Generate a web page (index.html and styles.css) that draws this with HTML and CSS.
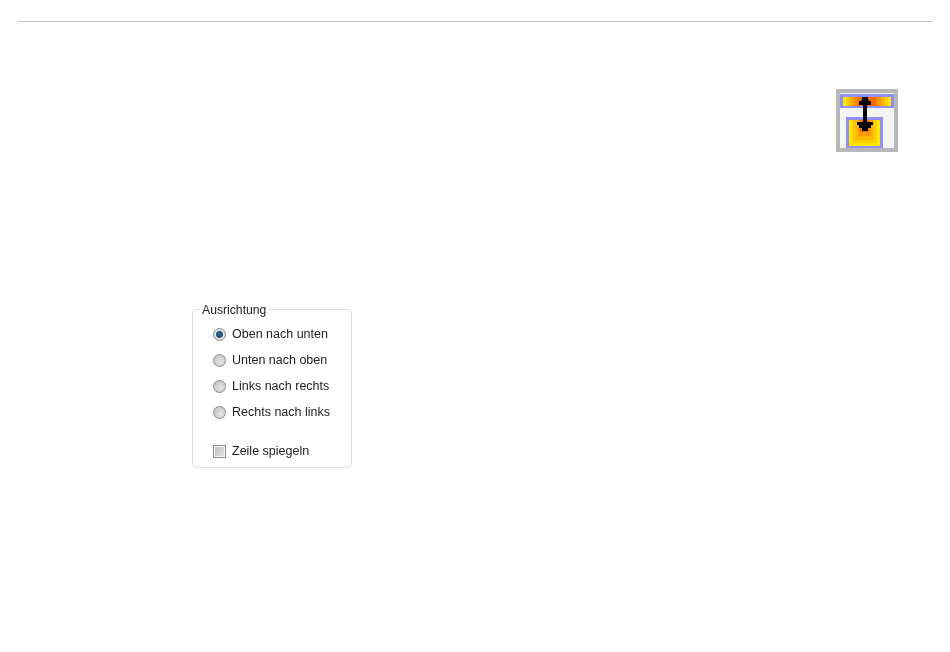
FILE: index.html
```html
<!DOCTYPE html>
<html lang="de">
<head>
    <meta charset="UTF-8">
    <meta name="viewport" content="width=device-width, initial-scale=1.0">
    <title>Ausrichtung</title>
    <link rel="stylesheet" href="styles.css">
</head>
<body>
    <hr class="top-rule">
    <div class="content">
        <svg class="orient-icon" width="62" height="63" viewBox="0 0 62 63" shape-rendering="crispEdges">
            <rect width="62" height="63" fill="#b8b8b8"/>
            <rect x="4" y="4" width="54" height="55" fill="#f4f4f4"/>
            <!-- top box -->
            <rect x="4" y="5" width="54" height="14" fill="#8f8ff6"/>
            <rect x="7" y="8" width="48" height="9" fill="#ffe800"/>
            <rect x="10" y="8" width="42" height="9" fill="#ffd000"/>
            <rect x="13" y="8" width="36" height="9" fill="#ffb800"/>
            <rect x="16" y="8" width="30" height="9" fill="#ffa000"/>
            <rect x="19" y="8" width="24" height="9" fill="#ff8800"/>
            <rect x="22" y="8" width="18" height="9" fill="#f86800"/>
            <!-- bottom box -->
            <rect x="10" y="28" width="37" height="31" fill="#8f8ff6"/>
            <rect x="13" y="31" width="31" height="26" fill="#ffe800"/>
            <rect x="16" y="31" width="25" height="23" fill="#ffd000"/>
            <rect x="19" y="31" width="19" height="20" fill="#ffb800"/>
            <rect x="22" y="31" width="13" height="16" fill="#ff9800"/>
            <rect x="24" y="31" width="9" height="12" fill="#f87000"/>
            <!-- arrow -->
            <rect x="27" y="10" width="4" height="31" fill="#000"/>
            <rect x="26" y="8" width="6" height="3" fill="#000"/>
            <rect x="25" y="11" width="8" height="1" fill="#000"/>
            <rect x="23" y="12" width="12" height="4" fill="#000"/>
            <rect x="21" y="33" width="16" height="3" fill="#000"/>
            <rect x="23" y="36" width="12" height="3" fill="#000"/>
            <rect x="26" y="39" width="6" height="3" fill="#000"/>
        </svg>
        <fieldset class="orient-box">
            <legend>Ausrichtung</legend>
            <label class="opt"><span class="radio checked"></span>Oben nach unten</label>
            <label class="opt"><span class="radio"></span>Unten nach oben</label>
            <label class="opt"><span class="radio"></span>Links nach rechts</label>
            <label class="opt"><span class="radio"></span>Rechts nach links</label>
            <label class="opt mirror"><span class="check"></span>Zeile spiegeln</label>
        </fieldset>
    </div>
</body>
</html>
```

FILE: styles.css
```css
body {
    font-family: "Liberation Sans", Arial, sans-serif;
    background-color: #ffffff;
    color: #222222;
    margin: 0;
    padding: 21px 18px 0;
}
.top-rule {
    border: none;
    border-top: 1px solid #c0c0c0;
    margin: 0;
}
.content {
    padding: 67px 34px 0 174px;
}
.orient-icon {
    display: block;
    margin-left: auto;
    filter: blur(0.4px);
}
.orient-box {
    box-sizing: border-box;
    width: 160px;
    height: 167px;
    margin: 149px 0 0 0;
    padding: 4px 0 0 0;
    border: 1px solid #d5dfe0;
    border-radius: 4px;
    font-size: 12.5px;
    filter: blur(0.3px);
}
.orient-box legend {
    padding: 2px 2px 0;
    margin-left: 7px;
    font-size: 12.2px;
    line-height: 14px;
}
.opt {
    display: flex;
    align-items: center;
    gap: 6px;
    height: 26px;
    margin-left: 20px;
}
.mirror {
    margin-top: 13px;
}
.radio {
    box-sizing: border-box;
    width: 13px;
    height: 13px;
    border-radius: 50%;
    border: 1px solid #8a8b8b;
    background: radial-gradient(circle at 60% 60%, #e6e6e6, #bcbcbc);
}
.radio.checked {
    background: radial-gradient(circle, #2a6ea6 0, #1c4f80 3px, #e8e8e8 4px, #c0c0c0 100%);
}
.check {
    box-sizing: border-box;
    width: 13px;
    height: 13px;
    border: 1px solid #8a8b8b;
    background: linear-gradient(135deg, #bcbcbc, #e8e8e8);
    box-shadow: inset 0 0 0 1px #f4f4f4;
}
```
